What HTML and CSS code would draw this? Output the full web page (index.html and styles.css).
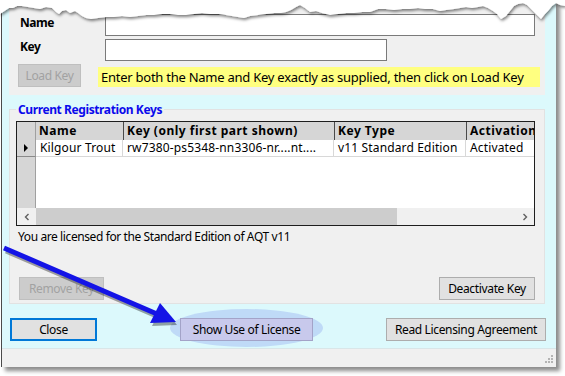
FILE: index.html
```html
<!DOCTYPE html>
<html>
<head>
<meta charset="utf-8">
<link rel="stylesheet" href="styles.css">
</head>
<body>
<div class="window">
  <div class="content">
    <section class="top-panel">
      <div class="field-row">
        <label class="field-label">Name</label>
        <div class="txt txt-name"></div>
      </div>
      <div class="field-row">
        <label class="field-label">Key</label>
        <div class="txt txt-key"></div>
      </div>
      <div class="load-row">
        <button class="btn btn-disabled btn-load">Load Key</button>
        <div class="hint">Enter both the Name and Key exactly as supplied, then click on Load Key</div>
      </div>
    </section>

    <fieldset class="group">
      <legend class="group-title">Current Registration Keys</legend>
      <div class="grid">
        <div class="grid-rows">
          <div class="row header">
            <div class="cell rh"></div>
            <div class="cell c-name">Name</div>
            <div class="cell c-key">Key (only first part shown)</div>
            <div class="cell c-type">Key Type</div>
            <div class="cell c-act">Activation</div>
          </div>
          <div class="row data">
            <div class="cell rh"><span class="tri"></span></div>
            <div class="cell c-name">Kilgour Trout</div>
            <div class="cell c-key">rw7380-ps5348-nn3306-nr....nt....</div>
            <div class="cell c-type">v11 Standard Edition</div>
            <div class="cell c-act">Activated</div>
          </div>
          <div class="row empty">
            <div class="cell rh"></div>
            <div class="cell blank"></div>
          </div>
        </div>
        <div class="hscroll">
          <div class="sb-btn"><svg width="8" height="8" viewBox="0 0 8 8"><path d="M5.5 1 L2.5 4 L5.5 7" fill="none" stroke="#606060" stroke-width="1.4"/></svg></div>
          <div class="sb-track"><div class="sb-thumb"></div></div>
          <div class="sb-btn"><svg width="8" height="8" viewBox="0 0 8 8"><path d="M2.5 1 L5.5 4 L2.5 7" fill="none" stroke="#606060" stroke-width="1.4"/></svg></div>
        </div>
      </div>
      <p class="licensed">You are licensed for the Standard Edition of AQT v11</p>
      <div class="group-buttons">
        <button class="btn btn-disabled btn-remove">Remove Key</button>
        <button class="btn btn-deactivate">Deactivate Key</button>
      </div>
    </fieldset>

    <div class="bottom-bar">
      <button class="btn btn-close">Close</button>
      <div class="highlight-wrap">
        <button class="btn btn-show">Show Use of License</button>
      </div>
      <button class="btn btn-read">Read Licensing Agreement</button>
    </div>
  </div>
  <div class="status-bar">
    <svg class="grip" width="10" height="10" viewBox="0 0 10 10">
      <g fill="#b4b4b4">
        <rect x="7" y="1" width="2" height="2"/>
        <rect x="4" y="4" width="2" height="2"/><rect x="7" y="4" width="2" height="2"/>
        <rect x="1" y="7" width="2" height="2"/><rect x="4" y="7" width="2" height="2"/><rect x="7" y="7" width="2" height="2"/>
      </g>
    </svg>
  </div>
</div>

<svg class="torn" width="565" height="26" viewBox="0 0 565 26">
  <defs>
    <filter id="sh" x="-5%" y="-50%" width="110%" height="200%">
      <feDropShadow dx="1" dy="2" stdDeviation="1.5" flood-color="#000" flood-opacity="0.5"/>
    </filter>
  </defs>
  <polygon filter="url(#sh)" fill="#fff" points="0,0 565,0 565,6 560,5 556,3 552,6 548,11 545,14 541,19 538,16 535,13 531,9 527,5 523,3 518,4 514,6 510,11 506,16 501,19 497,14 493,11 488,8 483,6 478,7 472,8 466,7 460,8 454,9 446,10 440,11 433,9 425,9 418,8 410,9 402,9 394,10 386,9 378,9 370,12 362,12 354,13 346,13 338,14 330,15 322,13 316,11 310,12 305,8 300,5 296,7 291,10 286,12 281,13 274,13 266,14 258,15 250,16 244,18 238,17 232,16 226,15 219,14 210,14 202,13 194,14 186,15 178,15 170,14 162,14 154,15 146,15 138,16 130,17 122,16 114,17 106,17 98,18 91,19 86,18 82,16 78,13 75,11 70,13 66,10 62,11 59,14 56,12 52,8 46,7 40,9 34,8 28,7 22,6 17,6 13,8 9,8 6,10 3,12 0,14"/>
</svg>

<svg class="arrow" width="200" height="340" viewBox="0 0 200 340">
  <g transform="translate(2,3)" opacity="0.35">
    <line x1="4" y1="248" x2="157" y2="314" stroke="#000" stroke-width="5"/>
    <polygon points="175,322 150,323 160,303" fill="#000"/>
  </g>
  <line x1="4" y1="248" x2="157" y2="314" stroke="#1414e6" stroke-width="5"/>
  <polygon points="176,322 150,323 160,303" fill="#1414e6"/>
</svg>
</body>
</html>
```

FILE: styles.css
```css
* { box-sizing: border-box; }

html, body {
  margin: 0;
  padding: 0;
}

body {
  width: 565px;
  height: 376px;
  overflow: hidden;
  position: relative;
  background: #ffffff;
  font-family: "Noto Sans", "Open Sans", sans-serif;
  font-size: 12px;
  color: #000;
}

.window {
  margin-left: 1px;
  width: 555px;
  height: 367px;
  border-left: 1px solid #4a4a4a;
  display: flex;
  flex-direction: column;
  box-shadow: 4px 4px 4px rgba(0, 0, 0, 0.45);
}

.content {
  flex: 1;
  background: #dcf9fc;
  padding: 0 11px 0 7px;
  display: flex;
  flex-direction: column;
}

/* ---------- top panel ---------- */
.top-panel {
  height: 95px;
  background: #f0f0f0;
  padding: 14px 0 0 0;
  display: flex;
  flex-direction: column;
  gap: 3px;
}

.field-row {
  display: flex;
  align-items: flex-start;
  height: 22px;
}

.field-label {
  width: 96px;
  padding-left: 11px;
  padding-top: 1px;
  line-height: 16px;
  font-weight: bold;
  font-size: 12px;
  letter-spacing: -0.5px;
}

.field-row + .field-row .field-label { padding-top: 0; }

.txt {
  height: 22px;
  background: #fff;
  border: 1px solid #7a7a7a;
}

.txt-name { width: 430px; }
.txt-key { width: 282px; }

.load-row {
  display: flex;
  align-items: flex-end;
  height: 23px;
}

.btn {
  font-family: "Noto Sans", "Open Sans", sans-serif;
  font-size: 12px;
  height: 23px;
  padding: 0;
  background: #e1e1e1;
  border: 1px solid #adadad;
  color: #000;
  letter-spacing: -0.35px;
}

.btn-disabled {
  background: #cccccc;
  border-color: #bfbfbf;
  color: #a2a2a2;
}

.btn-load {
  margin-left: 9px;
  width: 63px;
}

.hint {
  margin-left: 17px;
  width: 442px;
  height: 20px;
  line-height: 20px;
  background: #ffff80;
  padding-left: 3px;
  white-space: nowrap;
  font-size: 13px;
  letter-spacing: -0.25px;
}

/* ---------- group ---------- */
.group {
  margin: 6px 0 0 0;
  padding: 3px 9px 3px 6px;
  border: 1px solid #e2e2e2;
  background: #f0f0f0;
  min-width: 0;
}

.group-title {
  padding: 0 2px;
  font-weight: bold;
  color: #0a0aec;
  letter-spacing: -0.4px;
  line-height: 17px;
}

.grid {
  width: 519px;
  height: 105px;
  border: 1px solid #1e1e1e;
  background: #fff;
  display: flex;
  flex-direction: column;
  overflow: hidden;
}

.grid-rows {
  flex: 1;
  display: flex;
  flex-direction: column;
}

.row {
  display: grid;
  grid-template-columns: 19px 87px 211px 132px 100px;
}

.row.header {
  height: 18px;
  background: #d6d6d6;
  font-weight: bold;
  letter-spacing: 0.5px;
}

.row.data {
  height: 17px;
}

.row.empty {
  flex: 1;
}

.cell {
  white-space: nowrap;
  overflow: hidden;
  padding-left: 4px;
  line-height: 16px;
}

.header .cell {
  border-left: 1px solid #4a4a4a;
  line-height: 17px;
  padding-left: 3px;
}

.header .cell.c-name { border-left: none; }

.data .cell {
  border-right: 1px solid #d8d8d8;
  border-bottom: 1px solid #d8d8d8;
  letter-spacing: 0.15px;
}

.cell.rh {
  background: #d6d6d6;
  padding: 0;
  border-right: 1px solid #a0a0a0;
}

.header .cell.rh { border-left: none; }

.data .cell.rh {
  border-bottom: 1px solid #8a8a8a;
  border-right: 1px solid #a0a0a0;
  display: flex;
  align-items: center;
  justify-content: center;
}

.tri {
  width: 0;
  height: 0;
  border-top: 4px solid transparent;
  border-bottom: 4px solid transparent;
  border-left: 4px solid #000;
}

.empty .cell.rh { border-bottom: none; }

.hscroll {
  height: 17px;
  display: flex;
  background: #f0f0f0;
}

.sb-btn {
  width: 19px;
  display: flex;
  align-items: center;
  justify-content: center;
}

.sb-track {
  flex: 1;
  display: flex;
}

.sb-thumb {
  width: 361px;
  background: #cdcdcd;
}

.licensed {
  margin: 3px 0 0 2px;
  line-height: 16px;
  letter-spacing: -0.4px;
}

.group-buttons {
  margin-top: 32px;
  display: flex;
  justify-content: space-between;
}

.btn-remove {
  margin-left: 3px;
  width: 85px;
}

.btn-deactivate {
  width: 96px;
}

/* ---------- bottom bar ---------- */
.bottom-bar {
  height: 43px;
  padding-top: 14px;
  display: flex;
  align-items: flex-start;
}

.btn-close {
  margin-left: 1px;
  width: 87px;
  border: 2px solid #0078d7;
}

.highlight-wrap {
  position: relative;
  margin-left: 83px;
  display: flex;
}

.highlight-wrap::before {
  content: "";
  position: absolute;
  left: -10px;
  right: -10px;
  top: -9px;
  bottom: -6px;
  border-radius: 50%;
  background: #bfdaf7;
}

.btn-show {
  position: relative;
  width: 133px;
  background: #c8c9ec;
  border-color: #a3a3c8;
}

.btn-read {
  margin-left: auto;
  margin-right: -1px;
  width: 160px;
}

/* ---------- status bar ---------- */
.status-bar {
  height: 19px;
  background: #f0f0f0;
  border-top: 1px solid #d9e6e8;
  display: flex;
  justify-content: flex-end;
  align-items: flex-end;
  padding: 0 2px 3px 0;
}

/* ---------- overlays ---------- */
.torn {
  position: absolute;
  left: 0;
  top: 0;
}

.arrow {
  position: absolute;
  left: 0;
  top: 0;
}
```
